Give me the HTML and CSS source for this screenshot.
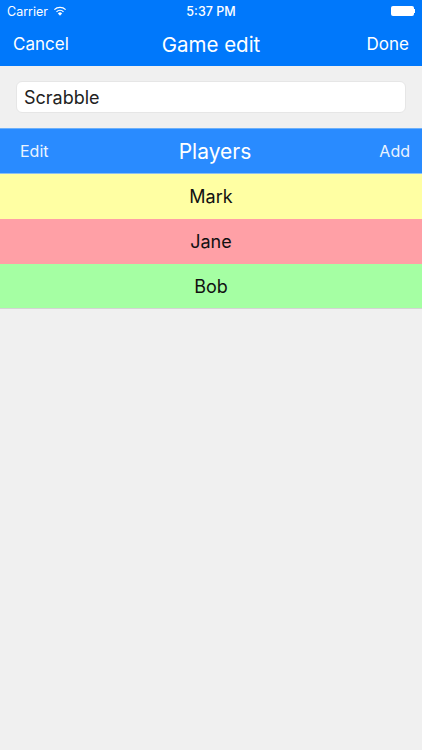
FILE: index.html
```html
<!DOCTYPE html>
<html lang="en">
<head>
    <meta charset="UTF-8">
    <meta name="viewport" content="width=device-width, initial-scale=1.0">
    <title>Game edit</title>
    <link rel="stylesheet" href="styles.css">
</head>
<body>
    <header class="top-bar">
        <div class="status-bar">
            <div class="status-left">
                <span>Carrier</span>
                <svg class="wifi" width="14" height="10" viewBox="0 0 14 10">
                    <path d="M7 9.8 L4.9 7.4 A3 3 0 0 1 9.1 7.4 Z" fill="#fff"/>
                    <path d="M3.5 5.9 A5 5 0 0 1 10.5 5.9" fill="none" stroke="#fff" stroke-width="1.3"/>
                    <path d="M1.4 3.6 A8 8 0 0 1 12.6 3.6" fill="none" stroke="#fff" stroke-width="1.3"/>
                </svg>
            </div>
            <span class="status-time">5:37 PM</span>
            <div class="battery">
                <div class="battery-body"></div>
                <div class="battery-tip"></div>
            </div>
        </div>
        <nav class="nav-bar">
            <span class="nav-btn">Cancel</span>
            <span class="nav-title">Game edit</span>
            <span class="nav-btn">Done</span>
        </nav>
    </header>

    <div class="form-group">
        <input class="name-input" type="text" value="Scrabble">
    </div>

    <div class="section-bar">
        <span class="section-btn">Edit</span>
        <span class="section-title">Players</span>
        <span class="section-btn">Add</span>
    </div>

    <ul class="players">
        <li class="player player-yellow">Mark</li>
        <li class="player player-red">Jane</li>
        <li class="player player-green">Bob</li>
    </ul>
</body>
</html>
```

FILE: styles.css
```css
* {
    margin: 0;
    padding: 0;
    box-sizing: border-box;
}

body {
    font-family: 'Inter', 'Liberation Sans', sans-serif;
    background: #f0f0f0;
    min-height: 100vh;
    color: #111;
}

.top-bar {
    background: #0078fb;
    color: white;
    height: 66px;
}

.status-bar {
    height: 22px;
    padding: 0 7px;
    display: grid;
    grid-template-columns: 1fr auto 1fr;
    align-items: center;
    font-size: 12.5px;
}

.status-left {
    display: flex;
    align-items: center;
    gap: 5px;
}

.status-time {
    font-weight: 500;
}

.battery {
    display: flex;
    align-items: center;
    justify-content: flex-end;
}

.battery-body {
    width: 23px;
    height: 10px;
    background: white;
    border-radius: 2px;
}

.battery-tip {
    width: 1.5px;
    height: 4px;
    background: white;
}

.nav-bar {
    height: 44px;
    padding: 0 13px;
    display: flex;
    align-items: center;
    justify-content: space-between;
}

.nav-btn {
    font-size: 17px;
    width: 60px;
}

.nav-btn:last-child {
    text-align: right;
}

.nav-title {
    font-size: 20.5px;
}

.form-group {
    height: 62px;
    padding: 15px 16px 0;
}

.name-input {
    display: block;
    width: 100%;
    height: 32px;
    padding: 0 7px;
    border: 1px solid #e6e6e6;
    border-radius: 6px;
    background: white;
    font-family: inherit;
    font-size: 18px;
    color: #222;
}

.section-bar {
    height: 46px;
    padding: 0 12px 0 20px;
    background: #298bff;
    color: white;
    display: flex;
    align-items: center;
    justify-content: space-between;
    border-top: 1px solid #6cb0fb;
    border-bottom: 1px solid #8cc0f0;
}

.section-btn {
    font-size: 16px;
    width: 60px;
    opacity: 0.9;
}

.section-btn:last-child {
    text-align: right;
}

.section-title {
    font-size: 21px;
}

.players {
    list-style: none;
}

.player {
    height: 45px;
    display: flex;
    align-items: center;
    justify-content: center;
    font-size: 18px;
}

.player-yellow {
    background: #ffffa3;
}

.player-red {
    background: #ffa0a6;
}

.player-green {
    background: #a5ffa3;
    border-bottom: 1px solid #d4d4d4;
}
```
